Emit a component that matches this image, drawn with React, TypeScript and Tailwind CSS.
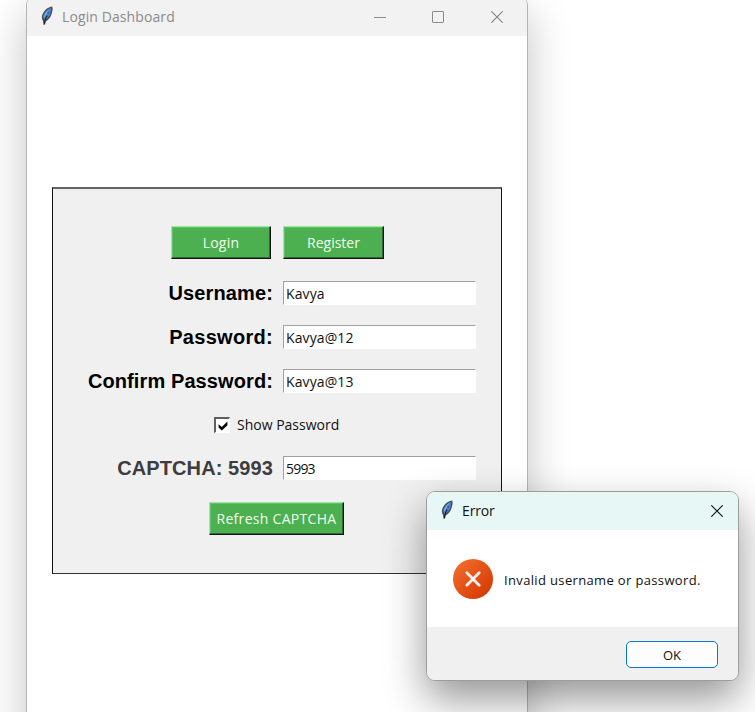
import React from "react";

function Feather() {
  return (
    <svg className="relative -top-px block h-5 w-3 shrink-0" viewBox="0 0 12 20" fill="none">
      <path d="M11.2 0.6C7.4 0.8 3.4 4 1.5 8.3C0.5 10.5 0.6 13 2 15L2.6 19L4.1 18.6L4.6 15.4C7.2 14.3 9.8 11.4 10.5 8.3C11.2 5.5 12.2 3.2 11.2 0.6Z" fill="#4a4e56" />
      <path d="M10.2 1.8C5.8 3.8 3 7.2 2.2 10.6L3.2 14L6.8 11.8C8.6 10 9.4 8 9.7 5.8Z" fill="#4484d4" />
      <path d="M9 2.4C5.8 4.4 3.6 7.2 2.9 10.4L3.6 11.8C4.8 8.6 6.2 5.6 9 2.4Z" fill="#7fb0e8" />
      <path d="M5.8 9.5L4.4 13L3.4 17.8" stroke="#111722" strokeWidth="1" />
      <path d="M6.6 6.6L8 7M5.3 10.2L6.5 10.5" stroke="#1b2a48" strokeWidth="0.8" />
    </svg>
  );
}

function Cross({ color }: { color: string }) {
  return (
    <svg className="block h-3 w-3" viewBox="0 0 12 12" stroke={color} strokeWidth="1.1">
      <path d="M0.3 0.3L11.7 11.7M11.7 0.3L0.3 11.7" />
    </svg>
  );
}

function GreenButton({ children, width, tracking }: { children: string; width: string; tracking: string }) {
  return (
    <button className={`flex h-[33px] shrink-0 items-center justify-center whitespace-nowrap border border-t-[#9be89d] border-l-[#9be89d] border-r-[#111] border-b-[#111] bg-[#4caf50] font-['Open_Sans','Noto_Sans',sans-serif] text-[14px] leading-5 text-[#f1fff1] shadow-[inset_-1px_-1px_0_#2c6b2f,inset_1px_1px_0_#62c266] ${width} ${tracking}`}>
      {children}
    </button>
  );
}

function Field({ label, value, labelClass, valueClass }: { label: string; value: string; labelClass: string; valueClass: string }) {
  return (
    <div className="flex h-6 items-center gap-2.5">
      <div className={`w-[220px] shrink-0 whitespace-nowrap text-right font-['Liberation_Sans',Arial,sans-serif] text-[20px] leading-6 font-bold ${labelClass}`}>{label}</div>
      <div className={`flex h-6 w-[193px] items-center border border-t-[#a0a0a0] border-l-[#a0a0a0] border-r-white border-b-white bg-white pt-px pl-0.5 font-['Open_Sans','Noto_Sans',sans-serif] text-[14px] leading-5 text-[#111] ${valueClass}`}>{value}</div>
    </div>
  );
}

export default function App() {
  return (
    <main className="relative h-[712px] w-[755px] overflow-hidden bg-white">
      <section className="absolute top-[-4px] left-[26px] h-[760px] w-[502px] overflow-hidden rounded-[9px] border border-[#b5b5b5] bg-white shadow-[0_16px_44px_rgba(0,0,0,0.24)]">
        <header className="flex h-[39px] items-center bg-[#f2f2f2] pt-px pl-3.5">
          <Feather />
          <h1 className="ml-[9px] w-[300px] whitespace-nowrap font-['Open_Sans','Noto_Sans',sans-serif] text-[14px] leading-5 tracking-[0.1px] text-[#8b8b8b]">Login Dashboard</h1>
          <div className="ml-[12px] h-px w-3 bg-[#8b8b8b]" />
          <div className="ml-[46px] h-3 w-3 rounded-[1px] border border-[#8b8b8b]" />
          <div className="ml-[47px]"><Cross color="#858585" /></div>
        </header>
        <div className="mt-[151px] ml-[25px] flex h-[387px] w-[450px] flex-col border border-t-2 border-t-[#646464] border-r-[#111] border-b-[#333] border-l-[#111] bg-[#f0f0f0]">
          <div className="mt-[37px] ml-[118px] flex gap-3">
            <GreenButton width="w-[100px]" tracking="tracking-[0.25px]">Login</GreenButton>
            <GreenButton width="w-[101px]" tracking="tracking-[0px]">Register</GreenButton>
          </div>
          <div className="mt-[22px] flex flex-col gap-5">
            <Field label="Username:" value="Kavya" labelClass="tracking-[0.12px] text-black" valueClass="tracking-[0.1px]" />
            <Field label="Password:" value="Kavya@12" labelClass="tracking-[0.3px] text-black" valueClass="tracking-[0.1px]" />
            <Field label="Confirm Password:" value="Kavya@13" labelClass="tracking-[0.1px] text-black" valueClass="tracking-[0.1px]" />
          </div>
          <div className="mt-[20px] ml-[161px] flex h-6 items-center">
            <div className="flex h-4 w-4 items-center justify-center border-t-2 border-l-2 border-r border-b border-t-[#606060] border-l-[#606060] border-r-white border-b-white bg-white">
              <svg className="h-2.5 w-2.5" viewBox="0 0 10 10"><path d="M0.6 3.2L3.8 6L9.4 0.6V4.2L3.8 9.4L0.6 6.6Z" fill="#000" /></svg>
            </div>
            <span className="ml-[7px] font-['Open_Sans','Noto_Sans',sans-serif] text-[14px] leading-5 text-[#111]">Show Password</span>
          </div>
          <div className="mt-[19px]"><Field label="CAPTCHA: 5993" value="5993" labelClass="tracking-[0.1px] text-[#3d3d3d]" valueClass="tracking-[-0.8px]" /></div>
          <div className="mt-[22px] ml-[156px]"><GreenButton width="w-[135px]" tracking="tracking-[0.3px]">Refresh CAPTCHA</GreenButton></div>
        </div>
      </section>

      <section className="absolute top-[491px] left-[426px] h-[190px] w-[313px] overflow-hidden rounded-[9px] border border-[#9d9d9d] bg-white shadow-[0_18px_42px_rgba(0,0,0,0.42)]">
        <header className="flex h-[38px] items-center bg-[#e6f7f5] pl-3.5">
          <Feather />
          <h2 className="ml-[9px] w-[244px] font-['Open_Sans','Noto_Sans',sans-serif] text-[14px] leading-5 tracking-[-0.15px] text-[#111]">Error</h2>
          <div className="ml-[5px]"><Cross color="#111" /></div>
        </header>
        <div className="flex h-[97px] items-center pl-[26px]">
          <svg className="block h-10 w-10" viewBox="0 0 40 40">
            <defs><linearGradient id="errorFill" x1="0" y1="0" x2="1" y2="1"><stop offset="0" stopColor="#f37333" /><stop offset="0.5" stopColor="#e45115" /><stop offset="1" stopColor="#cf3500" /></linearGradient></defs>
            <circle cx="20" cy="20" r="20" fill="url(#errorFill)" />
            <path d="M13.8 13.8L26.2 26.2M26.2 13.8L13.8 26.2" stroke="#fff4ed" strokeWidth="2.8" strokeLinecap="round" />
          </svg>
          <p className="ml-[11px] pt-[3px] whitespace-nowrap font-['Open_Sans','Noto_Sans',sans-serif] text-[13px] leading-5 tracking-[0.35px] text-[#111]">Invalid username or password.</p>
        </div>
        <footer className="flex h-[53px] items-center justify-end bg-[#f0f0f0] pt-[2px] pr-5">
          <button className="h-[27px] w-[92px] rounded-[5px] border border-[#0878d4] bg-[#fdfdfd] font-['Open_Sans','Noto_Sans',sans-serif] text-[13px] leading-5 text-[#111]">OK</button>
        </footer>
      </section>
    </main>
  );
}
